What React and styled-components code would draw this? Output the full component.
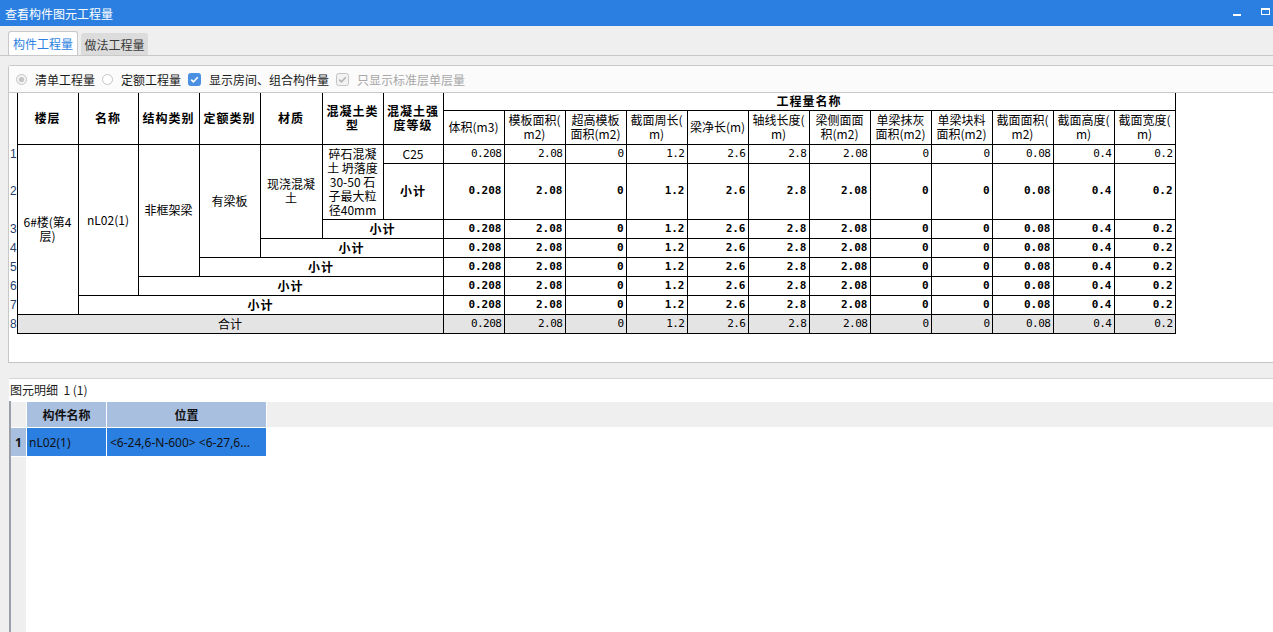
import React from "react";
import styled, { createGlobalStyle } from "styled-components";

const GlobalStyle = createGlobalStyle`
  html, body {
    margin: 0;
    padding: 0;
  }
  body {
    background: #efefef;
    font-family: "Noto Sans CJK SC", "Noto Sans", sans-serif;
    font-size: 12px;
    color: #1a1a1a;
    overflow: hidden;
  }
`;

const Window = styled.div`
  width: 1273px;
  height: 632px;
  display: flex;
  flex-direction: column;
  background: #efefef;
  overflow: hidden;
`;

const TitleBar = styled.div`
  height: 26px;
  flex: none;
  display: flex;
  align-items: center;
  padding: 0 3px 0 5px;
  background: #2b7fe0;
  color: #fff;
  font-size: 12px;
`;

const TitleText = styled.div`
  flex: 1;
`;

const MinButton = styled.span`
  width: 8px;
  height: 2px;
  margin-top: 3px;
  background: #fff;
`;

const MaxButton = styled.span`
  width: 9px;
  height: 7px;
  margin: -3px 0 0 20px;
  box-sizing: border-box;
  border: 1px solid #fff;
  border-top-width: 2px;
`;

const TabStrip = styled.div`
  height: 30px;
  flex: none;
  box-sizing: border-box;
  display: flex;
  align-items: flex-end;
  gap: 3px;
  padding-left: 8px;
  border-bottom: 1px solid #c8c8c8;
`;

const Tab = styled.div`
  width: ${(p) => p.$w}px;
  height: ${(p) => (p.$active ? 24 : 22)}px;
  box-sizing: border-box;
  display: flex;
  align-items: center;
  justify-content: center;
  border: 1px solid ${(p) => (p.$active ? "#c8c8c8" : "#dcdcdc")};
  border-bottom: none;
  border-radius: 3px 3px 0 0;
  background: ${(p) => (p.$active ? "#fff" : "#dcdcdc")};
  color: ${(p) => (p.$active ? "#2b7fe0" : "#3a3a3a")};
`;

const Panel = styled.div`
  height: 298px;
  flex: none;
  box-sizing: border-box;
  margin: 9px 0 0 8px;
  display: flex;
  flex-direction: column;
  background: #fff;
  border-top: 1px solid #c8c8c8;
  border-left: 1px solid #c8c8c8;
  border-bottom: 1px solid #c4c4c4;
  border-top-left-radius: 3px;
`;

const OptionsRow = styled.div`
  height: 27px;
  flex: none;
  box-sizing: border-box;
  display: flex;
  align-items: center;
  gap: 7px;
  padding-left: 7px;
  background: #fbfbfb;
  border-bottom: 1px solid #c8c8c8;
`;

const Option = styled.label`
  display: flex;
  align-items: center;
  gap: 8px;
  color: ${(p) => (p.$disabled ? "#a8a8a8" : "#1a1a1a")};
`;

const TableArea = styled.div`
  flex: 1;
  overflow: hidden;
  background: #fff;
`;

const Grid = styled.table`
  border-collapse: collapse;
  table-layout: fixed;
  width: 1166px;
  font-family: "Noto Sans CJK SC", sans-serif;
  font-size: 12px;
  color: #000;
`;

const Col = styled.col`
  width: ${(p) => p.$w}px;
`;

const Row = styled.tr`
  height: ${(p) => p.$h}px;
`;

const Cell = styled.td`
  border: 1px solid #000;
  border-top: ${(p) => (p.$noTop ? "none" : "1px solid #000")};
  padding: 0 2px;
  text-align: center;
  vertical-align: middle;
  font-weight: ${(p) => (p.$bold ? 700 : 400)};
  letter-spacing: ${(p) => (p.$bold ? "1px" : "0")};
  line-height: 14px;
  background: ${(p) => (p.$total ? "#e4e4e4" : "#fff")};
  white-space: nowrap;
  overflow: hidden;
`;

const Num = styled(Cell)`
  font-family: "DejaVu Sans Mono", "Liberation Mono", monospace;
  font-size: 11px;
  letter-spacing: ${(p) => (p.$bold ? "0" : "-0.5px")};
  text-align: right;
`;

const RowNo = styled.td`
  border: none;
  padding: 0 0 0 1px;
  font-family: "Liberation Sans", sans-serif;
  font-size: 12px;
  color: #26406a;
  text-align: left;
  vertical-align: middle;
  overflow: hidden;
`;

const Splitter = styled.div`
  height: 15px;
  flex: none;
  background: #efefef;
`;

const Detail = styled.div`
  flex: 1;
  display: flex;
  flex-direction: column;
  margin-left: 9px;
  background: #fff;
  border-top: 1px solid #d6d6d6;
`;

const DetailLabel = styled.div`
  height: 22px;
  flex: none;
  padding-left: 1px;
  line-height: 22px;
  color: #1a1a1a;
`;

const ListGrid = styled.div`
  flex: 1;
  display: grid;
  grid-template-columns: 15px 79px 159px 1fr;
  grid-template-rows: 25px 28px 1fr;
  gap: 1px;
  padding-top: 1px;
  background: #fff;
  border-left: 2px solid #9aa0aa;
  font-family: "Noto Sans", "Noto Sans CJK SC", sans-serif;
  font-size: 12px;
`;

const ListCell = styled.div`
  display: flex;
  align-items: center;
  justify-content: ${(p) => (p.$center ? "center" : "flex-start")};
  padding-left: ${(p) => p.$pad || 0}px;
  background: ${(p) => p.$bg};
  font-weight: ${(p) => (p.$bold ? 700 : 400)};
  color: #111;
  white-space: nowrap;
  overflow: hidden;
  grid-column: ${(p) => p.$span || "auto"};
`;

const colWidths = [61, 60, 61, 61, 62, 61, 60, 61, 61, 61, 61, 61, 61, 61, 61, 61, 61, 61, 61];

const values = ["0.208", "2.08", "0", "1.2", "2.6", "2.8", "2.08", "0", "0", "0.08", "0.4", "0.2"];

const subHeads = [
  ["体积(m3)"],
  ["模板面积(", "m2)"],
  ["超高模板", "面积(m2)"],
  ["截面周长(", "m)"],
  ["梁净长(m)"],
  ["轴线长度(", "m)"],
  ["梁侧面面", "积(m2)"],
  ["单梁抹灰", "面积(m2)"],
  ["单梁块料", "面积(m2)"],
  ["截面面积(", "m2)"],
  ["截面高度(", "m)"],
  ["截面宽度(", "m)"],
];

function Lines({ lines }) {
  return lines.map((l, i) => (
    <React.Fragment key={i}>
      {i > 0 && <br />}
      {l}
    </React.Fragment>
  ));
}

function Radio({ checked }) {
  return (
    <svg width="11" height="11" viewBox="0 0 11 11">
      <circle cx="5.5" cy="5.5" r="5" fill={checked ? "#f3f3f3" : "#fff"} stroke="#c4c4c4" />
      {checked && <circle cx="5.5" cy="5.5" r="2.6" fill="#c4c4c4" />}
    </svg>
  );
}

function Check({ disabled }) {
  return (
    <svg width="13" height="13" viewBox="0 0 13 13">
      <rect
        x="0.5"
        y="0.5"
        width="12"
        height="12"
        rx="2"
        fill={disabled ? "#f2f2f2" : "#4a90e2"}
        stroke={disabled ? "#c4c4c4" : "#4a90e2"}
      />
      <path
        d="M3.2 6.6 L5.4 8.8 L9.8 4.2"
        fill="none"
        stroke={disabled ? "#b4b4b4" : "#fff"}
        strokeWidth="1.6"
      />
    </svg>
  );
}

function ValueCells({ bold, total }) {
  return values.map((v, i) => (
    <Num key={i} $bold={bold} $total={total}>
      {v}
    </Num>
  ));
}

function App() {
  return (
    <Window>
      <GlobalStyle />
      <TitleBar>
        <TitleText>查看构件图元工程量</TitleText>
        <MinButton />
        <MaxButton />
      </TitleBar>

      <TabStrip>
        <Tab $active $w={70}>构件工程量</Tab>
        <Tab $w={67}>做法工程量</Tab>
      </TabStrip>

      <Panel>
        <OptionsRow>
          <Option>
            <Radio checked />
            清单工程量
          </Option>
          <Option>
            <Radio />
            定额工程量
          </Option>
          <Option>
            <Check />
            显示房间、组合构件量
          </Option>
          <Option $disabled>
            <Check disabled />
            只显示标准层单层量
          </Option>
        </OptionsRow>

        <TableArea>
          <Grid>
            <colgroup>
              <Col $w={8} />
              {colWidths.map((w, i) => (
                <Col key={i} $w={w} />
              ))}
            </colgroup>
            <thead>
              <Row $h={17}>
                <RowNo rowSpan={2} />
                <Cell rowSpan={2} $noTop $bold>楼层</Cell>
                <Cell rowSpan={2} $noTop $bold>名称</Cell>
                <Cell rowSpan={2} $noTop $bold>结构类别</Cell>
                <Cell rowSpan={2} $noTop $bold>定额类别</Cell>
                <Cell rowSpan={2} $noTop $bold>材质</Cell>
                <Cell rowSpan={2} $noTop $bold>
                  混凝土类<br />型
                </Cell>
                <Cell rowSpan={2} $noTop $bold>
                  混凝土强<br />度等级
                </Cell>
                <Cell colSpan={12} $noTop $bold>工程量名称</Cell>
              </Row>
              <Row $h={34}>
                {subHeads.map((h, i) => (
                  <Cell key={i}>
                    <Lines lines={h} />
                  </Cell>
                ))}
              </Row>
            </thead>
            <tbody>
              <Row $h={19}>
                <RowNo>1</RowNo>
                <Cell rowSpan={7}>
                  6#楼(第4<br />层)
                </Cell>
                <Cell rowSpan={6}>nL02(1)</Cell>
                <Cell rowSpan={5}>非框架梁</Cell>
                <Cell rowSpan={4}>有梁板</Cell>
                <Cell rowSpan={3}>
                  现浇混凝<br />土
                </Cell>
                <Cell rowSpan={2}>
                  碎石混凝<br />土 坍落度<br />30-50 石<br />子最大粒<br />径40mm
                </Cell>
                <Cell>C25</Cell>
                <ValueCells />
              </Row>
              <Row $h={56}>
                <RowNo>2</RowNo>
                <Cell $bold>小计</Cell>
                <ValueCells bold />
              </Row>
              {[2, 3, 4, 5, 6].map((span, i) => (
                <Row $h={19} key={span}>
                  <RowNo>{i + 3}</RowNo>
                  <Cell colSpan={span} $bold>小计</Cell>
                  <ValueCells bold />
                </Row>
              ))}
              <Row $h={19}>
                <RowNo>8</RowNo>
                <Cell colSpan={7} $total>合计</Cell>
                <ValueCells total />
              </Row>
            </tbody>
          </Grid>
        </TableArea>
      </Panel>

      <Splitter />

      <Detail>
        <DetailLabel>图元明细&nbsp;&nbsp;1 (1)</DetailLabel>
        <ListGrid>
          <ListCell $bg="#efefef" />
          <ListCell $bg="#a9bfe0" $center $bold>构件名称</ListCell>
          <ListCell $bg="#a9bfe0" $center $bold>位置</ListCell>
          <ListCell $bg="#efefef" />

          <ListCell $bg="#a9bfe0" $center $bold>1</ListCell>
          <ListCell $bg="#2b7fe0" $pad={2}>nL02(1)</ListCell>
          <ListCell $bg="#2b7fe0" $pad={3}>&lt;6-24,6-N-600&gt; &lt;6-27,6...</ListCell>
          <ListCell $bg="#fff" />

          <ListCell $bg="#efefef" />
          <ListCell $bg="#fff" $span="2 / 5" />
        </ListGrid>
      </Detail>
    </Window>
  );
}

export default App;
